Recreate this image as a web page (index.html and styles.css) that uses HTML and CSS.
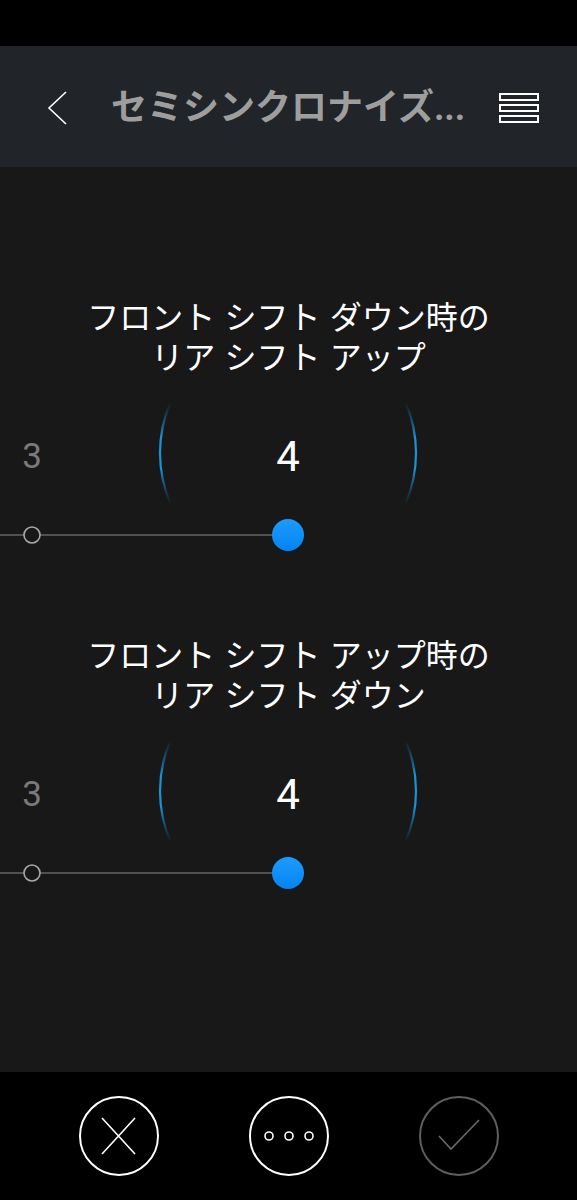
FILE: index.html
```
<!DOCTYPE html>
<html lang="ja">
<head>
<meta charset="utf-8">
<link rel="stylesheet" href="styles.css">
</head>
<body>
<div class="screen">
  <div class="status"></div>
  <header class="header">
    <svg class="back" width="24" height="36" viewBox="0 0 24 36"><path d="M20 2 L3 18 L20 34" fill="none" stroke="#fff" stroke-width="1.6"/></svg>
    <div class="title">セミシンクロナイズ...</div>
    <svg class="menu" width="42" height="30" viewBox="0 0 42 30"><rect x="2" y="1" width="38" height="6" fill="none" stroke="#fff" stroke-width="2"/><rect x="2" y="12" width="38" height="6" fill="none" stroke="#fff" stroke-width="2"/><rect x="2" y="23" width="38" height="6" fill="none" stroke="#fff" stroke-width="2"/></svg>
  </header>
  <main class="content">
    <section class="setting">
      <h2 class="label">フロント シフト ダウン時の<br>リア シフト アップ</h2>
      <div class="dial">
        <svg class="arcs" width="577" height="122" viewBox="0 0 577 122">
          <defs>
            <linearGradient id="ag1" gradientUnits="userSpaceOnUse" x1="0" y1="9" x2="0" y2="111">
              <stop offset="0" stop-color="#1478b0" stop-opacity="0"/>
              <stop offset="0.35" stop-color="#1a92d6"/>
              <stop offset="0.65" stop-color="#1a92d6"/>
              <stop offset="1" stop-color="#1478b0" stop-opacity="0"/>
            </linearGradient>
          </defs>
          <path d="M170.6 9 A128 128 0 0 0 170.6 111" fill="none" stroke="url(#ag1)" stroke-width="2.2"/>
          <path d="M405.4 9 A128 128 0 0 1 405.4 111" fill="none" stroke="url(#ag1)" stroke-width="2.2"/>
        </svg>
        <div class="nums">
          <span class="num-side">3</span>
          <span class="num-main">4</span>
        </div>
      </div>
      <svg class="slider" width="577" height="40" viewBox="0 0 577 40">
        <defs>
          <linearGradient id="tg1" x1="0" y1="0" x2="0" y2="1">
            <stop offset="0" stop-color="#1c9cff"/>
            <stop offset="1" stop-color="#0584f2"/>
          </linearGradient>
        </defs>
        <line x1="0" y1="20" x2="288" y2="20" stroke="#8a8a8a" stroke-width="1"/>
        <circle cx="32" cy="20" r="8" fill="#181818" stroke="#a8a8a8" stroke-width="1.6"/>
        <circle cx="288" cy="20" r="16" fill="url(#tg1)"/>
      </svg>
    </section>
    <section class="setting">
      <h2 class="label">フロント シフト アップ時の<br>リア シフト ダウン</h2>
      <div class="dial">
        <svg class="arcs" width="577" height="122" viewBox="0 0 577 122">
          <path d="M170.6 9 A128 128 0 0 0 170.6 111" fill="none" stroke="url(#ag1)" stroke-width="2.2"/>
          <path d="M405.4 9 A128 128 0 0 1 405.4 111" fill="none" stroke="url(#ag1)" stroke-width="2.2"/>
        </svg>
        <div class="nums">
          <span class="num-side">3</span>
          <span class="num-main">4</span>
        </div>
      </div>
      <svg class="slider" width="577" height="40" viewBox="0 0 577 40">
        <line x1="0" y1="20" x2="288" y2="20" stroke="#8a8a8a" stroke-width="1"/>
        <circle cx="32" cy="20" r="8" fill="#181818" stroke="#a8a8a8" stroke-width="1.6"/>
        <circle cx="288" cy="20" r="16" fill="url(#tg1)"/>
      </svg>
    </section>
  </main>
  <footer class="footer">
    <div class="btn">
      <svg width="40" height="40" viewBox="0 0 40 40"><path d="M3 2 L36 38 M36 2 L3 38" stroke="#fff" stroke-width="1.6" fill="none"/></svg>
    </div>
    <div class="btn">
      <svg width="50" height="20" viewBox="0 0 50 20"><circle cx="5" cy="10" r="4" fill="none" stroke="#fff" stroke-width="1.6"/><circle cx="25" cy="10" r="4" fill="none" stroke="#fff" stroke-width="1.6"/><circle cx="45" cy="10" r="4" fill="none" stroke="#fff" stroke-width="1.6"/></svg>
    </div>
    <div class="btn btn-off">
      <svg width="44" height="36" viewBox="0 0 44 36"><path d="M2 18 L14 31 L42 2" stroke="#6a6a6a" stroke-width="1.6" fill="none"/></svg>
    </div>
  </footer>
</div>
</body>
</html>
```
FILE: styles.css
```
* { box-sizing: border-box; }
html, body { margin: 0; padding: 0; background: #181818; }
body { font-family: "Noto Sans CJK JP", sans-serif; }
.screen { width: 577px; height: 1200px; display: flex; flex-direction: column; overflow: hidden; }
.status { height: 46px; background: #000; flex: none; }
.header { height: 121px; flex: none; background: #212529; display: flex; align-items: center; padding: 0 37px 0 46px; }
.back { flex: none; margin-top: 2px; }
.title { flex: 1; margin-left: 41px; color: #9e9e9e; font-family: Roboto, "Noto Sans CJK JP", sans-serif; font-weight: 700; font-size: 36px; line-height: 44px; white-space: nowrap; overflow: hidden; margin-top: 2px; }
.menu { flex: none; margin-top: 2px; }
.content { flex: 1; background: #181818; padding-top: 128px; display: flex; flex-direction: column; gap: 78px; }
.setting { display: flex; flex-direction: column; }
.label { margin: 0; font-weight: 400; color: #fff; font-size: 32px; line-height: 40px; text-align: center; word-spacing: 2px; height: 98px; white-space: nowrap; }
.dial { position: relative; height: 122px; }
.arcs { position: absolute; left: 0; top: 0; }
.nums { position: relative; display: flex; align-items: center; height: 122px; padding-top: 4px; font-family: Roboto, sans-serif; }
.num-side { width: 64px; text-align: center; color: #7a7a7a; font-size: 35px; }
.num-main { width: 448px; text-align: center; color: #fff; font-size: 42px; }
.slider { display: block; }
.footer { height: 128px; flex: none; background: #000; display: flex; justify-content: center; align-items: center; gap: 90px; }
.btn { width: 80px; height: 80px; border: 2px solid #fff; border-radius: 50%; display: flex; align-items: center; justify-content: center; }
.btn-off { border-color: #5e5e5e; }
```
